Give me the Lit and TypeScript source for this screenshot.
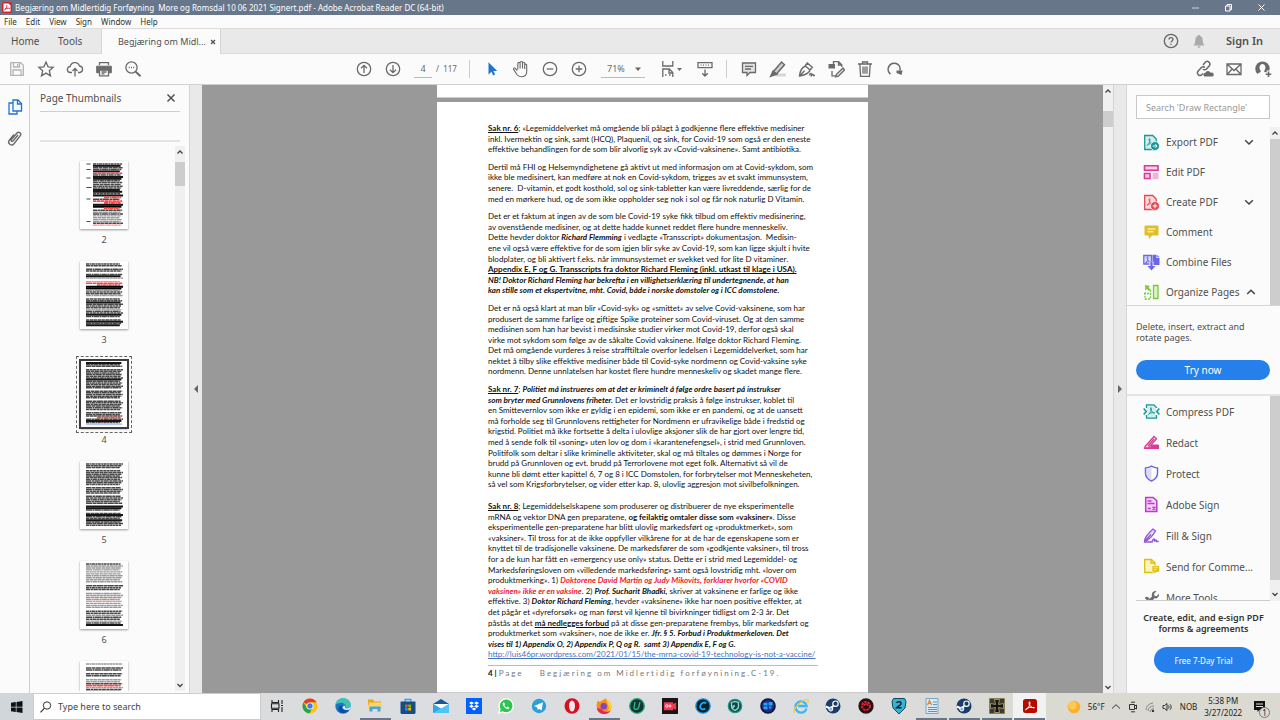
import { LitElement, html, svg, css } from "lit";
import { customElement } from "lit/decorators.js";

const icon = (body: unknown, w = 18, h = w, cls = "") =>
  html`<svg class=${cls} width=${w} height=${h} viewBox="0 0 ${w} ${h}" fill="none" stroke="currentColor" stroke-width="1.3" aria-hidden="true">${body}</svg>`;

const tb = {
  save: svg`<g stroke="#b4b4b4"><path d="M2.7 2.7h10l2.6 2.6v10H2.7z"/><path d="M5.5 3v4h6V3M5 15v-5h8v5M9.6 4v2"/></g>`,
  star: svg`<path d="M9 2l2.1 4.8 5.1.5-3.9 3.4 1.2 5.1L9 13.100l-4.500 2.700 1.200-5.100-3.900-3.400 5.100-.5z"/>`,
  cloud: svg`<path d="M6 12.500H4.500a3 3 0 0 1-.3-6A4.800 4.800 0 0 1 13.500 6a3.300 3.300 0 0 1 .5 6.500H12M9 16.500V8.500M6.500 11L9 8.500l2.500 2.500"/>`,
  print: svg`<path d="M4.500 5V2.600h9V5"/><path d="M1.700 6.200h14.600v6.600h-2v-3H3.700v3h-2z" fill="currentColor" stroke-width="1"/><path d="M4.500 10h9v5.800h-9zM6.500 12h5M6.500 13.800h3"/>`,
  find: svg`<circle cx="7.500" cy="7.500" r="5.600"/><path d="M11.700 11.700l4.800 4.500" stroke-width="2"/><path d="M4.800 7.500h1M7 7.500h1M9.200 7.500h1"/>`,
  up: svg`<circle cx="9" cy="9" r="6.700"/><path d="M9 13V5.500M6 8.300l3-3 3 3"/>`,
  down: svg`<circle cx="9" cy="9" r="6.700"/><path d="M9 5v7.500M6 9.700l3 3 3-3"/>`,
  pointer: svg`<path d="M5.500 2.300v12.200l3-2.700 1.700 3.600 1.900-.9-1.700-3.500h3.800z" fill="#1f74cf" stroke="none"/>`,
  hand: svg`<path d="M5.300 10.500L3.200 8.300c-.9-.9-2.200.2-1.500 1.300l3.400 5.200c1 1.400 2 1.900 4 1.900 3.500 0 5.600-1.900 5.600-5V5.200c0-1.500-2-1.500-2 0V9M12.700 5.500V3.400c0-1.500-2.200-1.500-2.200 0V8.500M10.500 3.400V2.600c0-1.500-2.400-1.500-2.400 0V8.500M8.100 3.500c0-1.500-2.300-1.500-2.300 0v6" stroke-width="1.100"/>`,
  minus: svg`<circle cx="9" cy="9" r="6.700"/><path d="M5.700 9h6.600"/>`,
  plus: svg`<circle cx="9" cy="9" r="6.700"/><path d="M5.700 9h6.600M9 5.700v6.600"/>`,
  fit: svg`<path d="M2.800 1v5h10V1M2.800 17V9h6.500l3.500 3.500V17M9 9v4h3.800M5 15h1.500M9 15h1.500"/><path d="M17 8h5l-2.500 3z" fill="currentColor" stroke="none"/>`,
  scroll: svg`<path d="M2 2.700h14v5H2zM4.500 5.200h1M7 5.200h1M9.500 5.200h1M12 5.200h1M9 9.500v6.500M6.200 13.200L9 16l2.800-2.800"/>`,
  note: svg`<path d="M2.500 3h13v9.500H10l-3 3v-3H2.500z" fill="#e2e2e2"/><path d="M5 6.300h8M5 9h6"/>`,
  marker: svg`<path d="M9 13.500h8v3H6z" fill="#d6d6d6" stroke="none"/><path d="M4.500 11.500L12.500 2l3 2.700-8 9.300z" fill="#ccc" stroke-width="1.500"/><path d="M1.500 16.500L4 11l4 3.300z" fill="currentColor"/>`,
  pen: svg`<path d="M1.500 16c.5-5 2-8.500 6-10l4.500 4c-.7 3.300-5 5-10.500 6zM1.500 16l5-5.200M7 6l2.300-3 5 4.300-2.300 2.700M11.500 15.500c1-3.500 2-2 2-.2 1.300-1.800 1.700-.8 1.800.2h1.700" stroke-width="1.400"/>`,
  convert: svg`<path d="M6.500 4V1.700h5l3.300 3.200v2M11.500 2v3h3M5 11v4.800h4"/><path d="M1.500 4h6.500v4.500H1.500z" fill="currentColor" stroke="none"/><path d="M16 8l-6.500 6.300-.8 2.500 2.700-.7L17.500 10z" fill="#ddd"/>`,
  trash: svg`<path d="M2 4h14M6.500 4V2h5v2M3.800 4l.8 12.300h8.800L14.200 4M7 6.500v7.300M9 6.500v7.300M11 6.500v7.300"/>`,
  rotate: svg`<path d="M5.500 14A6 6 0 1 1 15 10.500" stroke-width="1.600"/><path d="M11.500 10.500h6v.5l-1 4-5-2z" fill="currentColor" stroke="none"/>`,
  link: svg`<path d="M8 6l2.500-3a2.700 2.700 0 0 1 4 3.500L11.500 10c-1 1.200-2.700 1-3.500 0M10 8.500c-1-1-2.700-1-3.600.1L3 12.300a2.600 2.600 0 0 0 4 3.300l1-1.200" stroke-width="1.500" transform="translate(-1 -1)"/><path d="M8.500 16.500a2 2 0 0 1 .8-3.800 3 3 0 0 1 5.400 0 2 2 0 0 1 1.800 3.800z" fill="currentColor" stroke="none"/>`,
  mail: svg`<path d="M2 4h14v10.500H2zM2 4l7 6.500L16 4M2 14.500l5.200-5.500M16 14.500L10.800 9"/>`,
  user: svg`<circle cx="8.500" cy="8.700" r="7.200" fill="currentColor" stroke="none"/><path d="M3.500 14.300c.5-1.800 3.500-1.500 3.300-3.300C4.500 8 5.500 4 8.500 4s4 4 1.700 7c-.2 1.800 2.500 1.500 3 3l-2 2c-3 .8-5.500.3-7.700-1.700z" fill="#fbfbfb" stroke="none"/><path d="M14.500 10.500v7M11 14h7" stroke="#fbfbfb" stroke-width="3.500"/><path d="M14.500 11.500v5.500M11.700 14.200h5.600" stroke-width="1.600"/>`,
};

const AcroA = svg`<path d="M5 11.500c2-1.500 3-4 3-6 0-1.200-1-1.200-1 0 0 2.500 2 4 4.500 4.500M5 11.500c1-1.800 3.500-2 6-1.500" stroke-width=".9"/>`;

const tools1 = [
  { t: "Export PDF", c: "#1a9896", chev: "down", s: svg`<path d="M1.700 1.500h8l3.500 3.500v10.500H1.700z" fill="#d3ecec"/><g transform="translate(-1 0)">${AcroA}</g><circle cx="12" cy="12" r="4.500" fill="currentColor" stroke="#fbfbfb" stroke-width=".8"/><path d="M9.800 12h4.200M12.300 10.200L14 12l-1.700 1.800" stroke="#fff" stroke-width="1"/>` },
  { t: "Edit PDF", c: "#da3b96", s: svg`<path d="M1.500 1.800h13.500v4.400H1.500zM1.500 9.500h5.500v5H1.500z" fill="#f6cfe5" stroke-width="1.600"/><path d="M9.500 8.800h6v6.400h-6z" fill="#efb5d7" stroke="none"/>` },
  { t: "Create PDF", c: "#e34855", chev: "down", s: svg`<path d="M1.700 1.500h8l3.500 3.500v10.500H1.700z" fill="#fbdcdd"/><g transform="translate(-1 0)">${AcroA}</g><circle cx="12" cy="12" r="4.500" fill="currentColor" stroke="#fbfbfb" stroke-width=".8"/><path d="M9.700 12h4.600M12 9.700v4.600" stroke="#fff" stroke-width="1"/>` },
  { t: "Comment", c: "#dfbf25", s: svg`<path d="M2.500 1.500h12a1 1 0 0 1 1 1v8a1 1 0 0 1-1 1H9l-3.200 3.800V11.500H2.500a1 1 0 0 1-1-1v-8a1 1 0 0 1 1-1z" fill="currentColor" stroke="none"/><path d="M4.500 5h8M4.500 7.800h6" stroke="#fff" stroke-width="1"/>` },
  { t: "Combine Files", c: "#6b66e8", s: svg`<path d="M.8 1.500h7.700v8.500H.8z" fill="#dddcfb"/><g transform="translate(-3 -2)">${AcroA}</g><path d="M9.500 .8h4V4H16.500v7H9.500z" fill="currentColor" stroke="none"/><path d="M14.300.8l2.200 2.400h-2.200z" fill="currentColor" stroke="none"/><path d="M8.500 7.500v5" stroke="#fbfbfb" stroke-width="4"/><path d="M8.500 7.500v6" stroke-width="2.200"/><path d="M4.500 12h8l-4 4.500z" fill="currentColor" stroke="none"/>` },
  { t: "Organize Pages", c: "#7bc93f", chev: "up", s: svg`<path d="M10.500 1.500h4.500v13h-4.500z" fill="#d9f2c6"/><path d="M2 8.500v6.500h5.500V5" stroke-dasharray="2 1.200"/><path d="M2 1l.3 5.500 1.700-1.600L6 7l1.500-1.500-2-2L7 2z" fill="currentColor" stroke="none"/><path d="M1 9.500h7" stroke-dasharray="2 1"/>` },
];
const tools2 = [
  { t: "Compress PDF", c: "#1a9896", s: svg`<path d="M4 2h6.500L13 4.500V15H4z" fill="#d3ecec" stroke="none"/><path d="M3.500 5V1.800h7.300L13.500 4.500V5M3.500 12v3.200h10V12"/><g transform="translate(.5 0)">${AcroA}</g><path d="M.7 5.500l2.500 3-2.500 3M16.300 5.500l-2.500 3 2.500 3" stroke-width="1.600"/>` },
  { t: "Redact", c: "#da3b96", s: svg`<path d="M2 12.500L11 2.500l2.500 2.200-8.300 9.500H2z" fill="#f9d5e8"/><path d="M5 12l6-7" /><path d="M8.500 10.500H15a1 1 0 0 1 1 1v3.500H1v-1.500h6z" fill="currentColor" stroke="none"/>` },
  { t: "Protect", c: "#6b66e8", s: svg`<path d="M8.500 1.200c2 1.200 4 1.700 6 1.800v5c0 4-2.500 6.500-6 8-3.500-1.500-6-4-6-8V3c2-.1 4-.6 6-1.800z" fill="#fff" stroke-width="1.500"/><path d="M8.500 2.500V15c-3-1.500-5-3.500-5-7V3.800c2 0 3.500-.5 5-1.300z" fill="#dcdaf9" stroke="none"/>` },
  { t: "Adobe Sign", c: "#c038cc", s: svg`<path d="M2.700 1.500h7.500l3.600 3.300v10.700H2.700z" fill="#f2d3f4" stroke-width="1.500"/><path d="M4.500 5h4M4.500 7.500h7M4.800 12.500h3M9.500 10.800l3 3M12.500 10.800l-3 3"/>` },
  { t: "Fill & Sign", c: "#9256d9", s: svg`<path d="M1.500 14.500c0-4 3-7.500 8.500-12.500l2.500 2C10 8.500 6 13 1.500 14.500zM1.500 14.500L8 7.500" fill="#e5d8f7"/><path d="M1 15h8c1-3 2.500-4 2.500-2 0 1.500.5 1.500 1 .5.800-1 1 .2 1.200 1h2" stroke-width="1.500"/>` },
  { t: "Send for Comme...", c: "#dfbf05", s: svg`<path d="M1.700 1.500h6.800L12 5v9.500H1.700z" fill="#fbf3c4"/><path d="M8 1.500V5h4" /><path d="M9 7.700h7.500v6.300h-3l-2 2v-2H9z" fill="currentColor" stroke="#fbfbfb" stroke-width=".6"/><path d="M10.500 9.800h4.500M10.500 11.600h3" stroke="#fbf3c4" stroke-width=".8"/>` },
  { t: "More Tools", c: "#6e6e6e", s: svg`<path d="M1 15L9 7.500C8 4 10.500 1.500 13.500 2.200L11 4.700l.5 2 2 .5L16 4.700C16.500 8 14 10 11.500 9.300L5 16.500zM10.500 12c2-2 4-1 6 2.500v2h-3zM2 9.500c0-1.500 2-2.500 3.500-1l1 1-2 2z" fill="currentColor" stroke="none"/>` },
];

const steam = svg`<circle cx="9" cy="9" r="7.500" fill="#1b3c69" stroke="none"/><circle cx="11.500" cy="6.700" r="2.700" stroke="#fff" stroke-width="1.200"/><path d="M1.700 9.500l4.600 2 3-2.500" stroke="#fff" stroke-width="2"/><circle cx="6.800" cy="12" r="2" fill="#8ab0d8" stroke="#fff" stroke-width="1"/>`;
const apps: { n: string; s: unknown; run?: boolean; on?: boolean }[] = [
  { n: "Task View", s: svg`<path d="M4 3v2.500h6.500V3M4 15v-2.500h6.500V15M3.500 6.800h7.500v4.400H3.500zM14 3v4M14 10v5M13 8.500h2" stroke="#222" stroke-width="1.100"/>` },
  { n: "Chrome", s: svg`<g stroke="none"><circle cx="9" cy="9" r="7.500" fill="#fbc116"/><path d="M9 9L2.500 5.300A7.500 7.500 0 0 1 15.500 5.300H9z" fill="#e33b2e"/><path d="M2.500 5.300A7.500 7.500 0 0 0 8.300 16.500L11.500 11 9 9 5.800 11z" fill="#2ca14c"/><circle cx="9" cy="9" r="3.500" fill="#fff"/><circle cx="9" cy="9" r="2.700" fill="#3b7ce9"/></g>` },
  { n: "Edge", s: svg`<g stroke="none"><circle cx="9" cy="9" r="7.700" fill="#1b74c9"/><path d="M1.500 8C2.500 3 6 1.200 9.500 1.300c4.500.2 7.500 3.500 7.200 6.700-.3 2.500-3 3.600-5.500 2.800C12.500 8 10 5.800 7 5.800c-2.500 0-4.500 1-5.500 2.200z" fill="#3fc4b3"/><path d="M8 8.500c-1 4 2.500 6 7 4.300-3 4-9 4.500-10.500-.3C4 10 5.500 8 8 8.500z" fill="#0b4d96"/><path d="M10 8.500a2 2 0 0 1 1 2.500c2 1 5 0 5.600-2l-.5 3c-2 1.500-6 1.500-7.600-1.500z" fill="#e9f2f5"/></g>` },
  { n: "File Explorer", run: true, s: svg`<g stroke="none"><path d="M2 2.500h5l1.500 2H15v4H2z" fill="#eca61c"/><path d="M3 5.500h13V12H2z" fill="#fcd667"/><path d="M3.500 14.500V9.500h11v5h-3v-2.500h-5v2.500z" fill="#4ba3e3"/></g>` },
  { n: "Store", s: svg`<path d="M6 5V2.500h6V5" stroke="#35a2e6"/><path d="M1.500 4.500h15v11a1.500 1.500 0 0 1-1.500 1.500H3a1.500 1.500 0 0 1-1.500-1.500z" fill="#174d83" stroke="none"/><g stroke="none"><path d="M6 7.500h2.700v2.700H6z" fill="#f25022"/><path d="M9.300 7.500H12v2.700H9.300z" fill="#7fba00"/><path d="M6 10.800h2.700v2.700H6z" fill="#00a4ef"/><path d="M9.300 10.800H12v2.700H9.300z" fill="#ffb900"/></g>` },
  { n: "Mail", s: svg`<g stroke="none"><path d="M1 7l8-5 8 5v9H1z" fill="#14579e"/><path d="M1 7h16l-8 5.500z" fill="#fff"/><path d="M1 7l16 9H1z" fill="#2ba7ea"/><path d="M17 7v9H1z" fill="#52c4f4"/></g>` },
  { n: "Dropbox", s: svg`<path d="M1 1h16v16H1z" fill="#0061fe" stroke="none"/><path d="M6.500 4.500L9 6.100 6.500 7.700 4 6.100zM11.500 4.500L14 6.100l-2.500 1.600L9 6.100zM6.500 7.700L9 9.300l-2.500 1.600L4 9.300zM11.500 7.700L14 9.300l-2.500 1.600L9 9.300zM9 10.500l2.300 1.500L9 13.400 6.700 12z" fill="#fff" stroke="none"/>` },
  { n: "WhatsApp", s: svg`<path d="M2 16l1-3.800A7 7 0 1 1 5.800 15z" fill="#2cc64f" stroke="#fff"/><path d="M6 5.500c-.8 1.500 0 3 1.500 4.700s3.500 2.500 4.500 1.500l.4-1.200-2-.9-.8.900C8.300 10 7.500 9 7.300 8.200l.7-.8-.8-2z" fill="#fff" stroke="none"/>` },
  { n: "Telegram", s: svg`<circle cx="9" cy="9" r="7.200" fill="#2c9fd9" stroke="none"/><path d="M4 9l9-3.800-1.500 8.300-2.500-1.800-1.300 1.300-.4-2.500z" fill="#fff" stroke="none"/>` },
  { n: "Opera", s: svg`<ellipse cx="9" cy="9" rx="7.500" ry="7.700" fill="#d80f22" stroke="none"/><ellipse cx="9" cy="9" rx="3" ry="5.500" fill="#eaeaea" stroke="none"/>` },
  { n: "Firefox", run: true, s: svg`<g stroke="none"><path d="M9 2.500c2-2 2-1 3 .5 3 1.500 4.500 4 4.300 7A7.300 7.300 0 0 1 1.700 10c-.3-3 .5-5 1.300-6.500L4.500 5z" fill="#ff8a16"/><path d="M11 2c4 2 5.500 4.500 5.300 8 0 4-3.500 7-7.500 7 5-2 6-6 4-9.500z" fill="#ffcf2e"/><path d="M2 11c.5 4 4 6 7.500 6 3 0 5-1.500 6-3.500-3 2-7 2-9-1.500z" fill="#e8255b"/><circle cx="8.700" cy="9.300" r="3.200" fill="#7948c9"/></g>` },
  { n: "Uninstaller", s: svg`<circle cx="9" cy="9" r="7.300" fill="#17323a" stroke="#25a968"/><path d="M7 5l-1 5.500c-.3 2.500 4 2.500 4.600 0L12 5" stroke="#2cc07c"/>` },
  { n: "Recorder", s: svg`<path d="M1 1h16v16H1z" fill="#191517" stroke="none"/><path d="M3.500 6h8v6.500h-8zM11.500 8l3-1.500v5.500l-3-1.500" stroke="#ee3d52" fill="#ee3d52"/><circle cx="5.800" cy="9" r="1.300" stroke="#fff" stroke-width=".8"/><circle cx="9" cy="9" r="1" stroke="#fff" stroke-width=".8"/>` },
  { n: "Care", s: svg`<circle cx="9" cy="9" r="7.200" fill="#0e1f2c" stroke="#1298dd"/><path d="M12.300 6.300C8.500 3.500 5 9 6.600 11.300c1 1.500 3 1.500 4.500.2" stroke="#1aa6ee" stroke-width="1.800"/>` },
  { n: "Shield", s: svg`<circle cx="9" cy="9" r="6.700" fill="#0f4a48" stroke="#159c86"/><path d="M5.500 5.500L9 4.500l3.500 1v4c0 2-1.500 3-3.500 4-2-1-3.500-2-3.500-4zM9 9H7.300v2" stroke="#9fd7cc"/>` },
  { n: "Booster", s: svg`<circle cx="9" cy="9" r="7" fill="#1b2b8f" stroke="#131427" stroke-width="1.600"/><path d="M4.500 6l4-.5v3h-4zM9.500 5.300L13.500 5v3.500h-4zM4.500 9.500h4v3l-4-.5zM9.500 9.500h3.500l-2 3.200z" fill="#26a7f3" stroke="none"/>` },
  { n: "Explorer", s: svg`<path d="M14.500 11.500A5.600 5.600 0 1 1 14.600 9H6" stroke="#3fb6ef" stroke-width="2.300"/><path d="M2.500 16C0 13 9 3 15 2.500c2 0 1.500 2 .5 3.500" stroke="#f6c83c" stroke-width="1.200"/>` },
  { n: "Steam", s: steam },
  { n: "Driver", s: svg`<circle cx="9" cy="9" r="7" fill="#1d1013" stroke="#2a1215"/><circle cx="9" cy="9" r="4" stroke="#e3202e" stroke-width="2" stroke-dasharray="2.500 .8"/><path d="M7 9a2 2 0 0 1 4 0" stroke="#e3202e"/>` },
  { n: "Two", s: svg`<path d="M3.500 1.500h11l1.500 3-1 6.500-6 6-6-6-1-6.500z" fill="#35b4d2" stroke="#12475c" stroke-width="1"/><path d="M6.500 6c1-2 5-1.500 4.500.8-.3 1.500-3 2.500-4.500 4h5" stroke="#0b2935" stroke-width="1.500"/>` },
  { n: "WordPad", run: true, s: svg`<path d="M3 1.500h12v15H3z" fill="#d8e9f5" stroke="#7fa4c3" stroke-width="1"/><path d="M4.500 8L6.500 3.500l2 4.500M5.300 6.300h2.500" stroke="#e98323"/><path d="M10 5h4M10 7.500h4M5 10.500h9M5 12.500h9M5 14.500h9" stroke="#4f8dc2" stroke-width=".9"/>` },
  { n: "Steam game", run: true, s: steam },
  { n: "Cross", run: true, s: svg`<path d="M1.500 1.500h15v15h-15z" fill="#3d3a2e" stroke="#8c7f55" stroke-width="1"/><path d="M6.500 2.500h5L10.500 7.500l5-1v5l-5-1 1 5h-5l1-5-5 1v-5l5 1z" fill="#141414" stroke="#b8ac82" stroke-width=".8"/>` },
  { n: "Acrobat", run: true, on: true, s: svg`<rect x="2" y="2" width="14" height="14" rx="2.500" fill="#b30b00" stroke="none"/><path d="M4.500 12.800c2.500-1 4.500-4 4.500-7 0-1.300-1-1.300-1 0 0 3 2.500 5 5.500 5M4.500 12.800c1.500-2.500 5.500-2.800 9-2" stroke="#fff" stroke-width="1"/>` },
];

// Row codes: k heavy, b text, g light, r red, R heavy red, u blue, space blank
const thumbs = [
  { n: 2, inset: 12, rows: "bkbbkRbkkbbbbbkkbkRbRRkKRbgbggggbr" },
  { n: 3, inset: 5, rows: "bb bb bkg rRRKKgbbg bbkbbbrbbkb bkbk" },
  { n: 4, inset: 5, rows: "kbb bbbbbbkbbbbb bbbbb bbbbbb bbbRbkbu" },
  { n: 5, inset: 5, rows: "bbb bbbbbbbbb bbbb bbbbb kkb bkbbkbbb" },
  { n: 6, inset: 5, rows: "bggggggggg bbb ggggrggg bbgbbgbk" },
  { n: 7, inset: 5, rows: "g bb bb ggbRgbb b bb bb b bbb bb" },
];
const rowStyle: Record<string, [string, number]> = {
  k: ["#161616", 2], K: ["#000", 2.200], b: ["#484848", 1.500], g: ["#989898", 1.400], r: ["#f88", 1.200], R: ["#f44", 1.700], u: ["#b8c8ee", 2],
};
const thumbArt = (t: { n: number; inset: number; rows: string }) => {
  const step = 63 / Math.max(t.rows.length, 32);
  return svg`${[...t.rows].map((ch, i) => {
    if (ch === " ") return null;
    const [color, w] = rowStyle[ch];
    const end = 43 - ((i * 7 + t.n * 3) % 5) * 0.8;
    const start = ch === "R" && i % 3 === 0 ? t.inset + 12 : t.inset + 1;
    const y = 3 + i * step;
    const dash = ch === "k" || ch === "K" || ch === "u" ? "none" : `${3 + (i % 4)} .5 ${2 + (i % 3)} .4`;
    return svg`<path d="M${start} ${y}H${end}" stroke=${color} stroke-width=${w} stroke-dasharray=${dash}/>`;
  })}${t.inset > 10 ? svg`<path d="M6.500 3h4M6.500 8.500h4M6.500 17h4M6.500 26.500h5M6.500 38h4M6.500 60.500h4" stroke="#444" stroke-width="1"/>` : null}`;
};

const paragraphs = [
  [
    html`<b><u>Sak nr. 6</u></b>; «Legemiddelverket må omgående bli pålagt å godkjenne flere effektive medisiner`,
    `inkl. Ivermektin og sink, samt (HCQ), Plaquenil, og sink, for Covid-19 som også er den eneste`,
    `effektive behandlingen for de som blir alvorlig syk av «Covid-vaksinene». Samt antibiotika.`,
  ],
  [
    `Dertil må FHI og Helsemyndighetene gå aktivt ut med informasjon om at Covid-sykdom, som`,
    `ikke ble medisinert, kan medføre at nok en Covid-sykdom, trigges av et svakt immunsystem,`,
    html`senere.&nbsp; D-vitamin, et godt kosthold, sol og sink-tabletter kan være livreddende, særlig for de`,
    `med en mørkere hud, og de som ikke oppholder seg nok i sol og får nok naturlig D Vitamin.`,
  ],
  [
    `Det er et faktum at ingen av de som ble Covid-19 syke fikk tilbud om effektiv medisinering,`,
    `av ovenstående medisiner, og at dette hadde kunnet reddet flere hundre menneskeliv.`,
    html`Dette hevder doktor <b><i>Richard Flemming</i></b> i vedlagte «Transscript» dokumentasjon.&nbsp; Medisin-`,
    `ene vil også være effektive for de som igjen blir syke av Covid-19, som kan ligge skjult i hvite`,
    `blodplater, og bli aktivert f.eks. når immunsystemet er svekket ved for lite D vitaminer.`,
    html`<b><u>Appendix E, F og G. Transscripts fra doktor Richard Fleming (inkl. utkast til klage i USA).</u></b>`,
    html`<b><i>NB! Doktor Richard Fleming har bekrefta i en villighetserklæring til undertegnende, at han</i></b>`,
    html`<b><i>kan stille som et ekspertvitne, mht. Covid, både i norske domstoler og i ICC domstolene.</i></b>`,
  ],
  [
    `Det er nå også klart at man blir «Covid-syk» og «smittet» av selve Covid-vaksinene, som har`,
    `produsert de samme farlige og giftige Spike proteiner som Covid-viruset. Og at den samme`,
    `medisinen som han har bevist i medisinske studier virker mot Covid-19, derfor også skal`,
    `virke mot sykdom som følge av de såkalte Covid vaksinene. Ifølge doktor Richard Fleming.`,
    `Det må omgående vurderes å reise strafftiltale overfor ledelsen i Legemiddelverket, som har`,
    `nektet å tilby slike effektive medisiner både til Covid-syke nordmenn og Covid-vaksine syke`,
    `nordmenn. Denne unnlatelsen har kostet flere hundre menneskeliv og skadet mange flere.`,
  ],
  [
    html`<b><u>Sak nr. 7</u></b>; <b><i>Politiet må instrueres om at det er kriminelt å følge ordre basert på instrukser</i></b>`,
    html`<b><i>som bryter med Grunnlovens friheter.</i></b> Det er lovstridig praksis å følge instrukser, koblet til`,
    `en Smittevernlov som ikke er gyldig i en epidemi, som ikke er en pandemi, og at de uansett`,
    `må forholde seg til Grunnlovens rettigheter for Nordmenn er ufravikelige både i fredstid og`,
    `krigstid. Politiet må ikke fortsette å delta i ulovlige aksjoner slik de har gjort over lengre tid,`,
    `med å sende folk til «soning» uten lov og dom i «karantenefengsel», i strid med Grunnloven.`,
    `Politifolk som deltar i slike kriminelle aktiviteter, skal og må tiltales og dømmes i Norge for`,
    `brudd på Grunnloven og evt. brudd på Terrorlovene mot eget folk. Alternativt så vil de`,
    `kunne bli dømt etter kapittel 6, 7 og 8 i ICC Domstolen, for forbrytelser mot Menneskeheten,`,
    `så vel som Krigsforbrytelser, og vider etter kap. 8, ulovlig aggresjon mot sivilbefolkningen.`,
  ],
  [
    html`<b><u>Sak nr. 8</u></b>; Legemiddelselskapene som produserer og distribuerer de nye eksperimentelle`,
    html`mRNA og vektor DNA gen preparatene, <b>og feilaktig omtaler disse som «vaksiner»</b>. Disse`,
    `eksperimentelle gen-preparatene har blitt ulovlig markedsført og «produktmerket», som`,
    `«vaksiner». Til tross for at de ikke oppfyller vilkårene for at de har de egenskapene som er`,
    `knyttet til de tradisjonelle vaksinene. De markedsfører de som «godkjente vaksiner», til tross`,
    `for a de kun har fått en «emergency use only» status. Dette er i strid med Legemiddel- og`,
    `Markedsføringsloven om «villedende markedsføring» samt også lovstridig mht. «lover om`,
    html`produktmerking». 1) <b class="red"><i>Doktorene David Martin og Judy Mikovits, forklarer hvorfor «COVID</i></b>`,
    html`<b class="red"><i>vaksinen» ikke er en vaksine</i></b>. 2) <b><i>Prof. Sucharit Bhadki,</i></b> skriver at vaksinene er farlige og ikke`,
    html`effektive. 3) <b><i>Doktor Richard Fleming</i></b>, hevder «vaksinene» ikke har noen positive effekter, at`,
    `det pågår et «dyreforsøk» og man først vil kjenne til bivirkninger tidligst om 2-3 år. Det`,
    html`påstås at det <b><u>må nedlegges forbud</u></b> på at disse gen-preparatene frembys, blir markedsført og`,
    html`produktmerket som «vaksiner», noe de ikke er. <b><i>Jfr. § 5. Forbud i Produktmerkeloven. Det</i></b>`,
    html`<b><i>vises til 1) Appendix O, 2) Appendix P, Q og R.&nbsp; samt 3) Appendix E, F og G.</i></b>`,
    html`<a href="http://luis46pr.wordpress.com/2021/01/15/the-mrna-covid-19-technology-is-not-a-vaccine/">http://luis46pr.wordpress.com/2021/01/15/the-mrna-covid-19-technology-is-not-a-vaccine/</a>`,
  ],
];

const chevUp = svg`<path d="M2.500 7.500L5 5l2.500 2.500" stroke="#444" stroke-width="1.300"/>`;
const chevDown = svg`<path d="M2.500 3L5 5.500 7.500 3" stroke="#444" stroke-width="1.300"/>`;

@customElement("app-root")
export class AppRoot extends LitElement {
  static styles = css`
    :host { display: flex; flex-direction: column; height: 100vh; overflow: hidden; background: #fbfbfb; color: #505050; font: 10px/14px "Noto Sans", "Open Sans", sans-serif; }
    *, *::before { box-sizing: border-box; }
    button, input, select { font: inherit; color: inherit; border: 0; background: none; padding: 0; margin: 0; border-radius: 0; outline: 0; }
    button { display: flex; align-items: center; justify-content: center; }
    svg { display: block; flex: none; }
    .row { display: flex; align-items: center; }
    .title { height: 15px; background: #68768a; color: #fff; font-size: 8px; padding: 0 4px 0 2px; gap: 3px; flex: none; white-space: pre; }
    .title h1 { font: inherit; margin: 0; flex: 1; }
    .title button { width: 30px; height: 15px; }
    .menu { height: 13px; font-size: 8px; padding-left: 4px; gap: 9px; flex: none; color: #333; }
    .tabs { display: flex; height: 26px; background: #e9e9e9; border-top: 1px solid #dcdcdc; border-bottom: 1px solid #dcdcdc; flex: none; align-items: stretch; }
    .tabs .plain { font-size: 10px; padding: 0 0 0 11px; width: 47px; justify-content: flex-start; }
    .tabs .tools { width: 54px; }
    .tab { display: flex; align-items: center; width: 120px; margin-bottom: -1px; background: #fbfbfb; border-left: 1px solid #d5d5d5; border-right: 1px solid #d5d5d5; padding-left: 16px; }
    .tab span { flex: 1; font-size: 9px; white-space: nowrap; }
    .tab button { width: 16px; }
    .account { margin-left: auto; display: flex; align-items: center; gap: 10px; padding-right: 17px; }
    .account .sign { font-weight: 600; font-size: 11px; margin-left: 8px; }
    .bar { display: flex; height: 31px; flex: none; border-bottom: 1px solid #d0d0d0; color: #6a6a6a; }
    .side { display: flex; flex: 1 0 0; padding-left: 2px; }
    .side.end { justify-content: flex-end; padding: 0 3px 0 0; }
    .mid { display: flex; align-items: center; margin-right: 22px; }
    .bar button { width: 29px; height: 30px; }
    .bar .wide { width: 37px; }
    .field { width: 18px; height: 18px; border-bottom: 1px solid #bbb; text-align: center; font-size: 9px; margin-left: 7px; }
    .total { width: 20px; margin-left: 4px; font-size: 8px; white-space: nowrap; }
    .sep { width: 1px; height: 18px; background: #ccc; margin: 0 7px; }
    .sep.first { margin-left: 13px; }
    .zoom { display: flex; align-items: center; width: 44px; height: 18px; margin: 0 8px; padding-left: 6px; border-bottom: 1px solid #bbb; font-size: 9px; }
    .zoom select { appearance: none; width: 26px; }
    main { display: flex; flex: 1; min-height: 0; }
    .nav { width: 30px; border-right: 1px solid #d0d0d0; display: flex; flex-direction: column; padding-top: 9px; align-items: center; gap: 6px; color: #6a6a6a; flex: none; }
    .nav button { height: 25px; width: 29px; }
    .thumbs { width: 160px; display: flex; flex-direction: column; flex: none; border-right: 1px solid #d5d5d5; }
    .thumbs header { display: flex; align-items: center; justify-content: space-between; margin: 0 9px 0 10px; height: 27px; border-bottom: 1px solid #cfcfcf; }
    .thumbs h2 { font: inherit; margin: 0; }
    .thumbs header button { width: 18px; height: 18px; }
    .blank { height: 30px; margin: 0 9px 0 10px; border-bottom: 2px solid #e3e3e3; flex: none; }
    .strip { display: flex; flex: 1; min-height: 0; margin: 4px 4px 2px 0; }
    .list { flex: 1; overflow: hidden; display: flex; flex-direction: column; align-items: center; padding: 15px 0 0 3px; }
    .thumb { width: 56px; height: 100px; flex: none; display: flex; flex-direction: column; align-items: center; justify-content: flex-start; font-size: 9px; line-height: 12px; gap: 1px; }
    .frame { width: 56px; height: 77px; margin-top: -5px; padding: 5px 0 0 4px; display: block; }
    .frame svg { background: #fff; box-shadow: 0 1px 2px #999; }
    .cur .frame { border: 1px dashed #666; padding: 3px 0 0 3px; }
    .cur svg { outline: 2px solid #3c3c3c; outline-offset: -1px; }
    .scroll { width: 10px; background: #f0f0f0; display: flex; flex-direction: column; align-items: center; justify-content: space-between; flex: none; }
    .scroll i { width: 10px; background: #cdcdcd; }
    .scroll .grab { height: 24px; margin: 6px 0 auto; }
    .scroll .knob { height: 16px; margin: 16px 0 auto; }
    .scroll .fill { flex: 1; }
    .split { width: 12px; background: #e9e9e9; display: flex; align-items: center; justify-content: center; flex: none; }
    .viewer { flex: 1; background: #999; display: flex; flex-direction: column; align-items: center; min-width: 0; }
    .prev { width: 431px; height: 13px; background: #fff; margin-bottom: 4px; border-bottom: 1px solid #ccc; flex: none; }
    .paper { width: 431px; flex: 1; background: #fff; display: flex; flex-direction: column; padding: 21px 50px 14px 51px; color: #111; font: 8px/10px "Lato", sans-serif; border-bottom: 1px solid #ccc; }
    .text { flex: 1; display: flex; flex-direction: column; justify-content: space-between; white-space: nowrap; }
    .line { height: 10px; }
    .gap { margin-top: 7px; }
    .gap.big { margin-top: 11px; }
    .red { color: #f1202d; }
    .text a { color: #4472c4; }
    .foot { border-top: 1px solid #bbb; margin: 5px 0 0; padding-top: 2px; white-space: pre; color: #777; }
    .foot b { color: #111; }
    .spaced { letter-spacing: 2px; }
    aside { width: 154px; border-left: 1px solid #d5d5d5; display: flex; flex-direction: column; flex: none; }
    .split.right { border-left: 1px solid #d5d5d5; width: 13px; }
    .search { margin: 10px 10px 8px 9px; height: 24px; border: 1px solid #c8c8c8; padding: 0 9px; font-size: 9px; background: #fff; flex: none; width: 134px; }
    .search::placeholder { color: #999; opacity: 1; }
    .group { display: flex; border-bottom: 1px solid #d5d5d5; height: 179px; flex: none; overflow: hidden; }
    .group.more { height: auto; flex: 1; border: 0; }
    .tools-list { flex: 1; overflow: hidden; min-width: 0; }
    .tool { height: 30px; width: 100%; justify-content: flex-start; padding-left: 16px; gap: 6px; white-space: nowrap; }
    .more .tool { height: 31px; }
    .more .tools-list { border-bottom: 1px solid #ccc; margin: 0 0 0 9px; }
    .more .tool { padding-left: 7px; }
    .tool span { flex: 1; text-align: left; }
    .tool .chev { margin-right: 16px; color: #444; }
    .info { padding: 15px 9px 14px; border-bottom: 2px solid #e5e5e5; flex: none; font-size: 9px; line-height: 11px; }
    .info p { margin: 0 0 17px; }
    .pill { background: #2680eb; color: #fff; border-radius: 14px; width: 134px; height: 20px; font-size: 10px; }
    .promo { padding: 11px 0 20px; text-align: center; font-weight: 600; font-size: 9px; line-height: 11px; flex: none; display: flex; flex-direction: column; align-items: center; color: #333; }
    .promo p { margin: 0 0 13px; }
    .promo .pill { width: 100px; height: 26px; font-size: 8px; font-weight: 400; }
    .taskbar { height: 27px; flex: none; display: flex; background: linear-gradient(90deg, #d9dbdd 0%, #dcdee1 60%, #dadad2 85%); color: #222; }
    .start { width: 33px; background: #d0d6da; }
    .find { width: 228px; background: #fff; border: 1px solid #ccc; display: flex; align-items: center; gap: 6px; padding-left: 6px; flex: none; }
    .find input { flex: 1; min-width: 0; font-size: 9px; }
    .find input::placeholder { color: #444; opacity: 1; }
    .apps { flex: 1; display: grid; grid-auto-flow: column; grid-auto-columns: 1fr; }
    .apps button { border-bottom: 2px solid transparent; }
    .apps .run { border-image: linear-gradient(90deg, transparent 10%, #68768a 10%, #68768a 90%, transparent 90%) 2; border-width: 0 0 2px; border-style: solid; }
    .apps .on { background: #f2f2f2; }
    .tray { width: 234px; flex: none; display: flex; align-items: center; font-size: 8px; line-height: 13px; padding: 0 12px 0 21px; justify-content: space-between; }
    .tray .clock { text-align: center; line-height: 12px; margin-right: 5px; }
    .note { position: relative; }
    .badge { position: absolute; right: -2px; bottom: -5px; width: 11px; height: 11px; border: 1px solid #777; border-radius: 6px; background: #dcdcd6; line-height: 9px; text-align: center; }
  `;

  private tb(name: keyof typeof tb, label: string) {
    return html`<button aria-label=${label}>${icon(tb[name])}</button>`;
  }

  private tool(t: any) {
    return html`<button class="tool"><svg width="17" height="17" viewBox="0 0 17 17" fill="none" stroke=${t.c} color=${t.c} stroke-width="1.3" aria-hidden="true">${t.s}</svg><span>${t.t}</span>${
      t.chev ? html`<svg class="chev" width="10" height="10" viewBox="0 0 10 10" fill="none" stroke="currentColor" stroke-width="1.500"><path d=${t.chev === "up" ? "M1.200 7L5 3.200 8.800 7" : "M1.200 3.200L5 7l3.800-3.800"}/></svg>` : null
    }</button>`;
  }

  render() {
    return html`
      <div class="row title">
        ${icon(svg`<rect x="0" y="0" width="10" height="11" rx="2" fill="#d8202a" stroke="none"/><path d="M1.500 1.500h5l2 2v6h-7z" fill="#fff" stroke="none"/><path d="M2.500 8C4 7 5 5 4.700 3M2.500 8C3.500 6 6 6 8 6.500" stroke="#d8202a" stroke-width=".9"/>`, 10, 11)}
        <h1>Begjæring om Midlertidig Forføyning  More og Romsdal 10 06 2021 Signert.pdf - Adobe Acrobat Reader DC (64-bit)</h1>
        <button aria-label="Minimize">${icon(svg`<path d="M1 5h7" stroke="#b8c0ca"/>`, 9)}</button>
        <button aria-label="Restore">${icon(svg`<path d="M1.500 3h4.500v5h-4.500zM3 3V1.500h4.500v5H6" stroke-width="1"/>`, 9)}</button>
        <button aria-label="Close">${icon(svg`<path d="M1.500 1.500l6 6M7.500 1.500l-6 6" stroke-width="1"/>`, 9)}</button>
      </div>
      <nav class="row menu">${["File", "Edit", "View", "Sign", "Window", "Help"].map((m) => html`<button>${m}</button>`)}</nav>
      <div class="tabs">
        <button class="plain">Home</button><button class="plain tools">Tools</button>
        <div class="tab"><span>Begjæring om Midl...</span><button aria-label="Close tab">${icon(svg`<path d="M1 1l4 4M5 1L1 5" />`, 6)}</button></div>
        <div class="account">
          <button aria-label="Help">${icon(svg`<circle cx="9" cy="9" r="6.700" stroke="#666"/><path d="M7 7.500c0-2.700 4-2.500 4 0 0 1.500-2 1.500-2 3M9 11.700v1.300" stroke="#666"/>`)}</button>
          <button aria-label="Notifications">${icon(svg`<path d="M3.500 13.500c2-2 1.500-4 2-7 .4-2 2-2.500 2.500-2.700a1 1 0 0 1 2 0c.5.200 2.100.7 2.500 2.700.5 3 0 5 2 7zM7.500 14.200h3a1.500 1.500 0 0 1-3 0z" fill="#aaa" stroke="none"/>`)}</button>
          <button class="sign">Sign In</button>
        </div>
      </div>
      <div class="bar">
        <div class="side">${this.tb("save", "Save")}${this.tb("star", "Star")}${this.tb("cloud", "Upload")}${this.tb("print", "Print")}${this.tb("find", "Find")}</div>
        <div class="mid">
          ${this.tb("up", "Previous page")}${this.tb("down", "Next page")}
          <input class="field" aria-label="Page number" value="4" /><span class="total">/&nbsp; 117</span>
          <span class="sep first"></span>
          ${this.tb("pointer", "Select")}${this.tb("hand", "Pan")}${this.tb("minus", "Zoom out")}${this.tb("plus", "Zoom in")}
          <label class="zoom"><select aria-label="Zoom level"><option>71%</option></select>${icon(svg`<path d="M2 3.500h6L5 7z" fill="#666" stroke="none"/>`, 10)}</label>
          <button class="wide" aria-label="Fit width">${icon(tb.fit, 24, 18)}</button>${this.tb("scroll", "Scrolling mode")}
          <span class="sep"></span>
          ${this.tb("note", "Add comment")}${this.tb("marker", "Highlight")}${this.tb("pen", "Sign")}${this.tb("convert", "Edit stamp")}${this.tb("trash", "Delete")}${this.tb("rotate", "Rotate")}
        </div>
        <div class="side end">${this.tb("link", "Share link")}${this.tb("mail", "Email")}${this.tb("user", "Add people")}</div>
      </div>
      <main>
        <div class="nav">
          <button aria-label="Page thumbnails">${icon(svg`<g stroke="#1f74cf"><path d="M7 2h5l3.500 3.500V13H7z"/><path d="M11.500 2v4h4M7 5H3v11h8v-3"/></g>`)}</button>
          <button aria-label="Attachments">${icon(svg`<path d="M12 6l-5 6c-1 1-2.500-.2-1.700-1.300L11 4c1.700-2 5 .3 3.300 2.700l-6.300 8c-2.500 3-7-.3-4.700-3.500L8 5.500" stroke-width="1.400"/>`)}</button>
        </div>
        <section class="thumbs">
          <header><h2>Page Thumbnails</h2><button aria-label="Close panel">${icon(svg`<path d="M1.500 1.500l7 7M8.500 1.500l-7 7" stroke-width="1.500"/>`, 10)}</button></header>
          <div class="blank"></div>
          <div class="strip">
            <div class="list">${thumbs.map((t) => html`<button class="thumb ${t.n === 4 ? "cur" : ""}" aria-label="Page ${t.n}"><span class="frame">${icon(thumbArt(t), 48, 68)}</span>${t.n < 7 ? t.n : null}</button>`)}</div>
            <div class="scroll">${icon(chevUp, 10)}<i class="grab"></i>${icon(chevDown, 10)}</div>
          </div>
        </section>
        <div class="split">${icon(svg`<path d="M6 1v8L2 5z" fill="#666" stroke="none"/>`, 8, 10)}</div>
        <article class="viewer">
          <div class="prev"></div>
          <div class="paper">
            <div class="text">${paragraphs.map((p, pi) => p.map((l, i) => html`<div class="line ${i === 0 && pi > 0 ? (pi === 5 ? "gap big" : "gap") : ""}">${l}</div>`))}</div>
            <p class="foot"><b>4 | </b><span class="spaced">Page    Begjæring om Midlertidig forføynining.C-19.</span></p>
          </div>
        </article>
        <div class="scroll">${icon(chevUp, 10)}<i class="knob"></i>${icon(chevDown, 10)}</div>
        <div class="split right">${icon(svg`<path d="M2 1v8l4-4z" fill="#666" stroke="none"/>`, 8, 10)}</div>
        <aside>
          <input class="search" aria-label="Search tools" placeholder="Search 'Draw Rectangle'" />
          <div class="group"><div class="tools-list">${tools1.map((t) => this.tool(t))}</div><div class="scroll">${icon(chevUp, 10, 12)}<i class="fill"></i></div></div>
          <div class="info"><p>Delete, insert, extract and<br />rotate pages.</p><button class="pill">Try now</button></div>
          <div class="group more"><div class="tools-list">${tools2.map((t) => this.tool(t))}</div><div class="scroll"><i class="fill"></i>${icon(svg`<path d="M2.500 13L5 15.500 7.500 13" stroke="#444" stroke-width="1.300"/>`, 10, 21)}</div></div>
          <div class="promo"><p>Create, edit, and e-sign PDF<br />forms &amp; agreements</p><button class="pill">Free 7-Day Trial</button></div>
        </aside>
      </main>
      <footer class="taskbar">
        <button class="start" aria-label="Start">${icon(svg`<path d="M0 1.700L4.800 1v4.700H0zM5.500.9L11.500 0v5.700h-6zM0 6.400h4.800V11L0 10.300zM5.500 6.400h6V12l-6-.9z" fill="#111" stroke="none"/>`, 12)}</button>
        <label class="find">${icon(svg`<circle cx="7" cy="4.500" r="3.700" stroke="#333" stroke-width="1"/><path d="M4.300 7.300L.5 11.300" stroke="#333" stroke-width="1.200"/>`, 12)}<input aria-label="Search" placeholder="Type here to search" /></label>
        <div class="apps">${apps.map((a) => html`<button aria-label=${a.n} class="${a.run ? "run" : ""} ${a.on ? "on" : ""}">${icon(a.s)}</button>`)}</div>
        <div class="tray">
          ${icon(svg`<circle cx="7" cy="7" r="6.300" fill="#fbb02d" stroke="none"/><circle cx="5.500" cy="5.500" r="4" fill="#fdc94f" stroke="none"/>`, 14)}
          <span>56°F</span>
          ${icon(svg`<path d="M1 6.500L5 2.700l4 3.800" stroke="#333" stroke-width="1"/>`, 10)}
          ${icon(svg`<path d="M1.500 3.500h5v5h-5zM6.500 5l2-1v4l-2-1M3 1.200h4M3 10.800h4" stroke="#333" stroke-width="1"/>`, 10, 12)}
          ${icon(svg`<path d="M1 8A8 8 0 0 1 8 1M3 9a6 6 0 0 1 6-5M5 10a4 4 0 0 1 4-3.500" stroke="#888" stroke-width="1"/><circle cx="8" cy="9" r="1.200" fill="#333" stroke="none"/>`, 10)}
          ${icon(svg`<path d="M1 3.500h1.500L5 1.500v7L2.500 6.500H1zM6.500 3.500c.7.800.7 2.200 0 3M8 2.300c1.500 1.500 1.500 4 0 5.500" stroke="#333" stroke-width="1"/>`, 11, 10)}
          <span>NOB</span>
          <span class="clock">5:38 PM<br />3/27/2022</span>
          <span class="note">${icon(svg`<path d="M0 0h11v9H5.500L3.500 11V9H0z" fill="#111" stroke="none"/><path d="M2 3h7M2 5.500h7" stroke="#ddd" stroke-width="1"/>`, 14, 12)}<span class="badge">1</span></span>
        </div>
      </footer>
    `;
  }
}
